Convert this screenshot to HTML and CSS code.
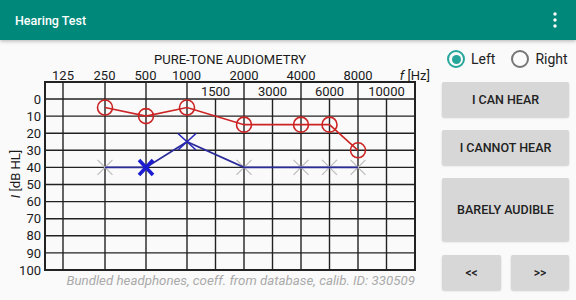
FILE: index.html
```html
<!DOCTYPE html>
<html>
<head>
<meta charset="utf-8">
<link rel="stylesheet" href="styles.css">
</head>
<body>
<header class="appbar">
  <span class="title">Hearing Test</span>
  <svg class="menu" width="6" height="16" viewBox="0 0 6 16"><circle cx="3" cy="2" r="1.7"/><circle cx="3" cy="8" r="1.7"/><circle cx="3" cy="14" r="1.7"/></svg>
</header>
<main class="content">
  <div class="chart">
    <svg width="430" height="260" viewBox="0 40 430 260" class="audiogram">
      <g class="grid">
        <line x1="45" y1="99" x2="415" y2="99"/>
        <line x1="45" y1="116.1" x2="415" y2="116.1"/>
        <line x1="45" y1="133.2" x2="415" y2="133.2"/>
        <line x1="45" y1="150.3" x2="415" y2="150.3"/>
        <line x1="45" y1="167.4" x2="415" y2="167.4"/>
        <line x1="45" y1="184.5" x2="415" y2="184.5"/>
        <line x1="45" y1="201.6" x2="415" y2="201.6"/>
        <line x1="45" y1="218.7" x2="415" y2="218.7"/>
        <line x1="45" y1="235.8" x2="415" y2="235.8"/>
        <line x1="45" y1="252.9" x2="415" y2="252.9"/>
        <line x1="63" y1="82" x2="63" y2="270"/>
        <line x1="105" y1="82" x2="105" y2="270"/>
        <line x1="146" y1="82" x2="146" y2="270"/>
        <line x1="187" y1="82" x2="187" y2="270"/>
        <line x1="244" y1="82" x2="244" y2="270"/>
        <line x1="301" y1="82" x2="301" y2="270"/>
        <line x1="358" y1="82" x2="358" y2="270"/>
        <line x1="215.5" y1="99" x2="215.5" y2="270"/>
        <line x1="272.5" y1="99" x2="272.5" y2="270"/>
        <line x1="329.5" y1="99" x2="329.5" y2="270"/>
        <line x1="386.5" y1="99" x2="386.5" y2="270"/>
        <rect class="border" x="45" y="82" width="370" height="188"/>
      </g>
      <g class="labels">
        <text class="caption" x="230" y="63.5" text-anchor="middle">PURE-TONE AUDIOMETRY</text>
        <text x="63" y="79.5" text-anchor="middle">125</text>
        <text x="104.5" y="79.5" text-anchor="middle">250</text>
        <text x="145.5" y="79.5" text-anchor="middle">500</text>
        <text x="186.5" y="79.5" text-anchor="middle">1000</text>
        <text x="244" y="79.5" text-anchor="middle">2000</text>
        <text x="301" y="79.5" text-anchor="middle">4000</text>
        <text x="358" y="79.5" text-anchor="middle">8000</text>
        <text x="430" y="79.5" text-anchor="end"><tspan class="ital">f</tspan> [Hz]</text>
        <text x="215.5" y="95.5" text-anchor="middle">1500</text>
        <text x="272.5" y="95.5" text-anchor="middle">3000</text>
        <text x="329.5" y="95.5" text-anchor="middle">6000</text>
        <text x="386.5" y="95.5" text-anchor="middle">10000</text>
        <text x="41" y="103.6" text-anchor="end">0</text>
        <text x="41" y="120.7" text-anchor="end">10</text>
        <text x="41" y="137.8" text-anchor="end">20</text>
        <text x="41" y="154.9" text-anchor="end">30</text>
        <text x="41" y="172" text-anchor="end">40</text>
        <text x="41" y="189.1" text-anchor="end">50</text>
        <text x="41" y="206.2" text-anchor="end">60</text>
        <text x="41" y="223.3" text-anchor="end">70</text>
        <text x="41" y="240.4" text-anchor="end">80</text>
        <text x="41" y="257.5" text-anchor="end">90</text>
        <text x="41" y="274.6" text-anchor="end">100</text>
        <text x="0" y="0" text-anchor="middle" transform="translate(19.5 174) rotate(-90)"><tspan class="ital">I</tspan> [dB HL]</text>
        <text class="note" x="415" y="284.5" text-anchor="end">Bundled headphones, coeff. from database, calib. ID: 330509</text>
      </g>
      <g class="gray-x">
        <path d="M97.5 159.9 L112.5 174.9 M112.5 159.9 L97.5 174.9"/>
        <path d="M236.5 159.9 L251.5 174.9 M251.5 159.9 L236.5 174.9"/>
        <path d="M293.5 159.9 L308.5 174.9 M308.5 159.9 L293.5 174.9"/>
        <path d="M322 159.9 L337 174.9 M337 159.9 L322 174.9"/>
        <path d="M350.5 159.9 L365.5 174.9 M365.5 159.9 L350.5 174.9"/>
      </g>
      <polyline class="blue-line" points="105,167.4 146,167.4 187,141.75 244,167.4 358,167.4"/>
      <path class="blue-thin" d="M178 133.5 L196 150 M196 133.5 L178 150"/>
      <path class="blue-thick" d="M139 160 L153 175 M153 160 L139 175"/>
      <polyline class="red-line" points="105,107.55 146,116.1 187,107.55 244,124.65 301,124.65 329.5,124.65 358,150.3"/>
      <g class="red-o">
        <circle cx="105" cy="107.55" r="7.5"/>
        <circle cx="146" cy="116.1" r="7.5"/>
        <circle cx="187" cy="107.55" r="7.5"/>
        <circle cx="244" cy="124.65" r="7.5"/>
        <circle cx="301" cy="124.65" r="7.5"/>
        <circle cx="329.5" cy="124.65" r="7.5"/>
        <circle cx="358" cy="150.3" r="7.5"/>
      </g>
    </svg>
  </div>
  <aside class="panel">
    <div class="radios">
      <label class="radio"><span class="knob on"></span>Left</label>
      <label class="radio"><span class="knob"></span>Right</label>
    </div>
    <button class="btn">I CAN HEAR</button>
    <button class="btn">I CANNOT HEAR</button>
    <button class="btn tall">BARELY AUDIBLE</button>
    <div class="nav">
      <button class="btn small">&lt;&lt;</button>
      <button class="btn small">&gt;&gt;</button>
    </div>
  </aside>
</main>
</body>
</html>
```

FILE: styles.css
```css
* { box-sizing: border-box; }
html, body { margin: 0; padding: 0; }
body {
  width: 576px;
  height: 300px;
  overflow: hidden;
  background: #fafafa;
  font-family: Roboto, "Liberation Sans", sans-serif;
  color: #222;
}
.appbar {
  height: 40px;
  background: #00897b;
  display: flex;
  align-items: center;
  justify-content: space-between;
  padding: 0 18px 0 15px;
  box-shadow: 0 1px 4px rgba(0,0,0,0.3);
  position: relative;
  z-index: 1;
}
.title {
  color: #fff;
  font-size: 12.5px;
  font-weight: 500;
}
.menu { fill: #fff; }
.content {
  display: flex;
  height: 260px;
}
.chart { width: 430px; height: 260px; }
.audiogram { display: block; }
.grid line { stroke: #222; stroke-width: 1.4; }
.grid .border { fill: none; stroke: #222; stroke-width: 2; }
.labels text { font-family: Roboto, sans-serif; font-size: 13px; fill: #1a1a1a; }
.labels .caption { font-size: 13px; }
.labels .ital { font-style: italic; }
.labels .note { font-style: italic; fill: #aaa; font-size: 13.3px; }
.gray-x path { stroke: #bdbdbd; stroke-width: 1.3; fill: none; }
.blue-line { fill: none; stroke: #2b2b9a; stroke-width: 1.8; }
.blue-thin { fill: none; stroke: #2424b8; stroke-width: 1.6; }
.blue-thick { fill: none; stroke: #1c1cd0; stroke-width: 3.6; }
.red-line { fill: none; stroke: #cc2424; stroke-width: 1.6; }
.red-o circle { fill: none; stroke: #cc2424; stroke-width: 1.6; }
.panel {
  width: 146px;
  padding: 9px 7px 0 12px;
  display: flex;
  flex-direction: column;
}
.radios {
  display: flex;
  height: 20px;
  align-items: center;
  padding-left: 5px;
  gap: 16px;
  margin-bottom: 13px;
}
.radio {
  display: flex;
  align-items: center;
  gap: 6px;
  font-size: 14px;
  color: #222;
}
.knob {
  width: 18px;
  height: 18px;
  border-radius: 50%;
  border: 2px solid #757575;
  display: flex;
  align-items: center;
  justify-content: center;
}
.knob.on { border-color: #26a69a; }
.knob.on::after {
  content: "";
  width: 9px;
  height: 9px;
  border-radius: 50%;
  background: #26a69a;
}
.btn {
  height: 35px;
  border: none;
  border-radius: 2px;
  background: #d7d7d7;
  box-shadow: 0 1px 2px rgba(0,0,0,0.18);
  font-family: Roboto, sans-serif;
  font-size: 12.5px;
  font-weight: 500;
  color: #222;
  margin-bottom: 13px;
  padding: 0;
}
.btn.tall { height: 63px; margin-bottom: 14px; }
.nav { display: flex; gap: 10px; }
.btn.small { width: 59px; margin: 0; font-size: 12px; }
.btn.small + .btn.small { width: 58px; }
```
